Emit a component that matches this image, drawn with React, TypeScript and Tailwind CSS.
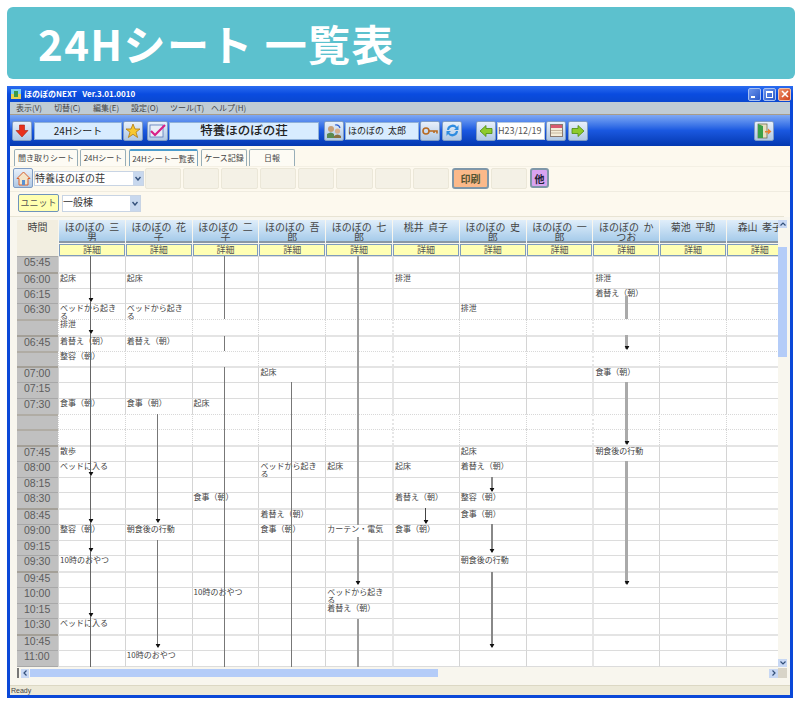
import React from "react";
import { Fragment } from "react";

const jp = "font-['Noto_Sans_CJK_JP',sans-serif]";

type RowLine = "thin" | "thick" | "dot";

const rowCells: Record<RowLine, string> = {
  thin: "border-t border-t-[#dcdcdc]",
  thick: "border-t-2 border-t-[#e4e4e4]",
  dot: "border-t border-dotted border-t-[#d8d8d8]",
};

const timeCells: Record<RowLine, string> = {
  thin: "border-t border-t-[#a8a8a8]",
  thick: "border-t-2 border-t-[#a4a098]",
  dot: "border-t-2 border-t-[#b0aca4]",
};

const rows: { time: string; line: RowLine; items?: Record<number, string> }[] = [
  { time: "05:45", line: "thin" },
  { time: "06:00", line: "thick", items: { 0: "起床", 1: "起床", 5: "排泄", 8: "排泄" } },
  { time: "06:15", line: "thin", items: { 8: "着替え（朝）" } },
  { time: "06:30", line: "thin", items: { 0: "ベッドから起き\nる", 1: "ベッドから起き\nる", 6: "排泄" } },
  { time: "", line: "dot", items: { 0: "排泄" } },
  { time: "06:45", line: "thick", items: { 0: "着替え（朝）", 1: "着替え（朝）" } },
  { time: "", line: "dot", items: { 0: "整容（朝）" } },
  { time: "07:00", line: "thick", items: { 3: "起床", 8: "食事（朝）" } },
  { time: "07:15", line: "thin" },
  { time: "07:30", line: "thin", items: { 0: "食事（朝）", 1: "食事（朝）", 2: "起床" } },
  { time: "", line: "dot" },
  { time: "", line: "dot" },
  { time: "07:45", line: "thick", items: { 0: "散歩", 6: "起床", 8: "朝食後の行動" } },
  { time: "08:00", line: "thin", items: { 0: "ベッドに入る", 3: "ベッドから起き\nる", 4: "起床", 5: "起床", 6: "着替え（朝）" } },
  { time: "08:15", line: "thin" },
  { time: "08:30", line: "thin", items: { 2: "食事（朝）", 5: "着替え（朝）", 6: "整容（朝）" } },
  { time: "08:45", line: "thick", items: { 3: "着替え（朝）", 6: "食事（朝）" } },
  { time: "09:00", line: "thin", items: { 0: "整容（朝）", 1: "朝食後の行動", 3: "食事（朝）", 4: "カーテン・電気", 5: "食事（朝）" } },
  { time: "09:15", line: "thin" },
  { time: "09:30", line: "thin", items: { 0: "10時のおやつ", 6: "朝食後の行動" } },
  { time: "09:45", line: "thick" },
  { time: "10:00", line: "thin", items: { 2: "10時のおやつ", 4: "ベッドから起き\nる" } },
  { time: "10:15", line: "thin", items: { 4: "着替え（朝）" } },
  { time: "10:30", line: "thin", items: { 0: "ベッドに入る" } },
  { time: "10:45", line: "thick" },
  { time: "11:00", line: "thin", items: { 1: "10時のおやつ" } },
  { time: "11:15", line: "thin" },
];

const names = [
  "ほのぼの  三\n男",
  "ほのぼの  花\n子",
  "ほのぼの  二\n子",
  "ほのぼの  吾\n郎",
  "ほのぼの  七\n郎",
  "桃井  貞子",
  "ほのぼの  史\n郎",
  "ほのぼの  一\n郎",
  "ほのぼの  か\nつお",
  "菊池  平助",
  "森山  孝子",
];

// x, from, to, width, colour, arrow at the end (page coordinates)
const lines: [number, number, number, number, string, boolean][] = [
  [90, 257, 302, 1, "#666666", true],
  [90, 302, 334, 1, "#666666", true],
  [90, 334, 476, 1, "#666666", true],
  [90, 476, 523, 1, "#666666", true],
  [90, 523, 552, 1, "#666666", true],
  [90, 552, 617, 1, "#666666", true],
  [90, 617, 668, 1, "#666666", false],
  [157, 415, 523, 1, "#777777", true],
  [157, 541, 648, 1, "#777777", true],
  [224, 257, 320, 1, "#777777", false],
  [224, 337, 352, 1, "#777777", false],
  [224, 368, 668, 1, "#777777", false],
  [291, 383, 668, 1, "#777777", false],
  [357, 257, 526, 2, "#9c9c9c", false],
  [357, 538, 585, 2, "#9c9c9c", true],
  [357, 620, 668, 2, "#9c9c9c", false],
  [425, 509, 524, 1, "#444444", true],
  [491, 478, 492, 2, "#888888", true],
  [491, 525, 553, 2, "#888888", true],
  [491, 573, 648, 2, "#888888", true],
  [625, 297, 320, 3, "#aaaaaa", false],
  [625, 336, 350, 3, "#aaaaaa", true],
  [625, 383, 445, 3, "#aaaaaa", true],
  [625, 462, 585, 3, "#aaaaaa", true],
];

const blanks = ["w-[36px]", "w-[36px]", "w-[37px]", "w-[36px]", "w-[36px]", "w-[37px]", "w-[36px]", "w-[36px]"];

function Multi({ text }: { text: string }) {
  return (
    <>
      {text.split("\n").map((t, i) => (
        <Fragment key={i}>
          {i > 0 && <br />}
          {t}
        </Fragment>
      ))}
    </>
  );
}

function IconBtn({ className = "", children }: { className?: string; children: React.ReactNode }) {
  return (
    <div
      className={`w-[20px] h-[20px] shrink-0 flex items-center justify-center rounded-[2px] border border-[#7f9cc4] bg-linear-to-b from-[#e8f0fa] to-[#b0c8e4] ${className}`}
    >
      {children}
    </div>
  );
}

function BlueField({ className = "", children }: { className?: string; children: React.ReactNode }) {
  return (
    <div
      className={`h-[18px] shrink-0 flex items-center justify-center bg-[#d8ecff] border border-[#8fb0d8] text-[#222] ${jp} ${className}`}
    >
      {children}
    </div>
  );
}

function Combo({ className = "", children }: { className?: string; children: React.ReactNode }) {
  return (
    <div className={`relative shrink-0 bg-white border border-[#c8d4e4] text-[#333] text-[10px] leading-[11px] ${jp} ${className}`}>
      {children}
      <div className="absolute right-0 top-0 bottom-0 w-[10px] bg-[#c8d8ee] flex items-center justify-center">
        <svg width="6" height="5" viewBox="0 0 6 5">
          <path d="M0.5 1 L3 4 L5.5 1" fill="none" stroke="#33507a" strokeWidth="1.4" />
        </svg>
      </div>
    </div>
  );
}

function Tab({ className = "", active = false, label }: { className?: string; active?: boolean; label: string }) {
  return (
    <div
      className={`h-[17px] shrink-0 flex items-center justify-center rounded-t-[2px] border border-b-0 border-[#98aeb8] bg-[#fdfbf4] text-[8px] text-[#444] ${jp} ${
        active ? "border-t-2 border-t-[#4c9ccc] border-x-[#7ea6c0]" : ""
      } ${className}`}
    >
      {label}
    </div>
  );
}

function Arrow() {
  return (
    <svg className="absolute -bottom-px left-1/2 -translate-x-1/2" width="5" height="4" viewBox="0 0 5 4">
      <path d="M0 0 H5 L2.5 4 Z" fill="#111" />
    </svg>
  );
}

function GreenArrow({ flip = false }: { flip?: boolean }) {
  return (
    <svg width="14" height="14" viewBox="0 0 14 14" className={flip ? "-scale-x-100" : ""}>
      <path d="M1 7 L7 1.5 V4.5 H13 V9.5 H7 V12.5 Z" fill="#8ecb2c" stroke="#4b8a10" strokeWidth="0.8" />
    </svg>
  );
}

export default function App() {
  return (
    <div className="w-[800px] h-[702px] bg-white overflow-hidden pt-[7px] pl-[7px]">
      {/* Banner */}
      <div className="w-[788px] h-[72px] rounded-[6px] bg-[#5cc1ce] flex items-center pl-[31px]">
        <span className={`text-[42px] leading-none font-bold tracking-[1.4px] text-white ${jp}`}>24Hシート 一覧表</span>
      </div>

      {/* Window */}
      <div className="mt-[7px] w-[786px] h-[612px] bg-[#0a48d8] flex flex-col">
        <div className="h-[16px] shrink-0 flex items-center pl-[3px] pr-[2px] bg-linear-to-b from-[#2a6cf0] via-[#0a4ce0] to-[#0a48d0]">
          <svg width="12" height="12" viewBox="0 0 12 12" className="shrink-0">
            <rect x="1" y="1" width="10" height="5" fill="#7fd0f0" />
            <rect x="1" y="6" width="10" height="5" fill="#e8d050" />
            <rect x="4" y="3" width="4" height="6" fill="#3a9a4a" />
          </svg>
          <span className={`ml-[2px] text-[8px] font-bold text-white whitespace-pre ${jp}`}>ほのぼのNEXT   Ver.3.01.0010</span>
          <div className="ml-auto flex gap-[2px]">
            <div className="w-[13px] h-[13px] rounded-[2px] border border-[#a8c0f0] bg-linear-to-br from-[#6c94ec] to-[#2a58c8] flex items-end pl-[2px] pb-[2px]">
              <div className="w-[4px] h-[2px] bg-white" />
            </div>
            <div className="w-[13px] h-[13px] rounded-[2px] border border-[#a8c0f0] bg-linear-to-br from-[#6c94ec] to-[#2a58c8] flex items-center justify-center">
              <div className="w-[7px] h-[7px] border border-white border-t-2" />
            </div>
            <div className="w-[13px] h-[13px] rounded-[2px] border border-[#f0c0a8] bg-linear-to-br from-[#ec9068] to-[#d04018] flex items-center justify-center">
              <svg width="8" height="8" viewBox="0 0 8 8">
                <path d="M1 1 L7 7 M7 1 L1 7" stroke="#fff" strokeWidth="1.6" />
              </svg>
            </div>
          </div>
        </div>

        <div className="mx-[3px] mb-[3px] flex-1 min-h-0 flex flex-col bg-[#fdf9ee]">
          {/* Menu */}
          <div className={`h-[13px] shrink-0 flex items-center bg-[#c0ccd4] border-b border-[#a89c88] text-[8px] text-[#444] pl-[6px] ${jp}`}>
            <span className="w-[38px]">表示(V)</span>
            <span className="w-[39px]">切替(C)</span>
            <span className="w-[38px]">編集(E)</span>
            <span className="w-[39px]">設定(O)</span>
            <span className="w-[41px]">ツール(T)</span>
            <span>ヘルプ(H)</span>
          </div>

          {/* Blue toolbar */}
          <div className="h-[31px] shrink-0 flex items-center pl-[2px] bg-linear-to-b from-[#7ea8f4] via-[#1a58e0] to-[#0438b0]">
            <IconBtn>
              <svg width="14" height="14" viewBox="0 0 14 14">
                <path d="M4.5 1 H9.5 V6.5 H13 L7 13 L1 6.5 H4.5 Z" fill="#e8301c" stroke="#a82010" strokeWidth="0.6" />
              </svg>
            </IconBtn>
            <BlueField className="ml-[2px] w-[88px] text-[10px]">24Hシート</BlueField>
            <IconBtn className="ml-px">
              <svg width="16" height="16" viewBox="0 0 16 16">
                <path d="M8 1 L10 6 H15 L11 9.2 L12.6 14.5 L8 11.3 L3.4 14.5 L5 9.2 L1 6 H6 Z" fill="#f8c830" stroke="#b07810" strokeWidth="0.8" />
              </svg>
            </IconBtn>
            <IconBtn className="ml-[4px] w-[21px]">
              <svg width="17" height="15" viewBox="0 0 17 15">
                <rect x="1" y="2" width="13" height="12" fill="#e8eef8" stroke="#5878b8" strokeWidth="0.8" />
                <path d="M2 8 L6 12 L16 2" fill="none" stroke="#d82088" strokeWidth="2.2" />
              </svg>
            </IconBtn>
            <BlueField className="ml-px w-[150px] text-[12.5px] font-medium">特養ほのぼの荘</BlueField>
            <IconBtn className="ml-[5px]">
              <svg width="16" height="16" viewBox="0 0 16 16">
                <circle cx="5" cy="6" r="3" fill="#c8a078" />
                <path d="M1 15 V11 Q5 8 8 11 V15 Z" fill="#5a8a50" />
                <circle cx="11.5" cy="8" r="2.6" fill="#d8b090" />
                <path d="M8 15 V13 Q11.5 10 15 13 V15 Z" fill="#8a7040" />
                <path d="M9 2 Q13 1 14 5" fill="none" stroke="#3060d0" strokeWidth="1.2" />
              </svg>
            </IconBtn>
            <BlueField className="ml-px w-[74px] text-[9px] justify-start! pl-[2px] whitespace-pre">ほのぼの  太郎</BlueField>
            <IconBtn className="ml-px">
              <svg width="16" height="10" viewBox="0 0 16 10">
                <circle cx="4" cy="5" r="3" fill="none" stroke="#b86a20" strokeWidth="1.6" />
                <path d="M7 5 H15 V7.5 M12 5 V7" fill="none" stroke="#b86a20" strokeWidth="1.6" />
              </svg>
            </IconBtn>
            <IconBtn className="ml-[2px]">
              <svg width="15" height="15" viewBox="0 0 15 15">
                <path d="M2 7 A5.5 5.5 0 0 1 12 4 L13.5 2 V7 H9 L10.8 5.2 A4 4 0 0 0 4 7 Z" fill="#2f8ce0" />
                <path d="M13 8 A5.5 5.5 0 0 1 3 11 L1.5 13 V8 H6 L4.2 9.8 A4 4 0 0 0 11 8 Z" fill="#2f8ce0" />
              </svg>
            </IconBtn>
            <IconBtn className="ml-[14px]">
              <GreenArrow />
            </IconBtn>
            <div className={`ml-px w-[48px] h-[18px] shrink-0 flex items-center bg-white border border-[#b8c8dc] text-[9px] text-[#555] ${jp}`}>H23/12/19</div>
            <IconBtn className="ml-px w-[19px]">
              <svg width="13" height="13" viewBox="0 0 13 13">
                <rect x="0.5" y="0.5" width="12" height="12" fill="#f4ecd8" stroke="#8a7a70" />
                <rect x="1" y="1" width="11" height="3" fill="#d85a70" />
                <path d="M1 6.5 H12 M1 9 H12" stroke="#c8b8a0" />
              </svg>
            </IconBtn>
            <IconBtn className="ml-[2px]">
              <GreenArrow flip />
            </IconBtn>
            <IconBtn className="ml-[166px]">
              <svg width="15" height="16" viewBox="0 0 15 16">
                <rect x="1" y="1" width="9" height="14" fill="#e8e0c0" stroke="#707050" strokeWidth="0.8" />
                <path d="M1 1 L6 3 V15 H1 Z" fill="#3aa048" />
                <path d="M8 8 H11 V5.5 L14.5 8.5 L11 11.5 V9.5 H8 Z" fill="#e88030" />
              </svg>
            </IconBtn>
          </div>

          {/* Tabs */}
          <div className="h-[20px] shrink-0 flex items-end pl-[4px]">
            <Tab className="w-[64px]" label="聞き取りシート" />
            <Tab className="ml-[2px] w-[46px]" label="24Hシート" />
            <Tab className="ml-[3px] w-[69px]" active label="24Hシート一覧表" />
            <Tab className="ml-[3px] w-[46px]" label="ケース記録" />
            <Tab className="ml-[2px] w-[46px]" label="日報" />
          </div>

          {/* Action row */}
          <div className="h-[26px] shrink-0 flex items-center pl-[3px] pb-[2px] border-b border-[#f0ece0] border-t border-t-[#f4f0e4]">
            <IconBtn className="w-[19px]">
              <svg width="15" height="15" viewBox="0 0 15 15">
                <path d="M7.5 1 L14 7.5 H12 V14 H3 V7.5 H1 Z" fill="#f4e4c8" stroke="#d86030" strokeWidth="1" />
                <rect x="6" y="9" width="3" height="5" fill="#5a90d0" />
              </svg>
            </IconBtn>
            <Combo className="ml-px w-[110px] h-[15px]">特養ほのぼの荘</Combo>
            <div className="ml-px flex gap-[2px]">
              {blanks.map((w, i) => (
                <div key={i} className={`${w} h-[21px] bg-[#f4f1e6] border border-[#ebe7d8] rounded-[2px]`} />
              ))}
            </div>
            <div className={`ml-[3px] w-[37px] h-[21px] shrink-0 flex items-center justify-center bg-[#fbb98a] border-2 border-[#7f97a8] rounded-[3px] text-[10px] text-[#553] font-bold ${jp}`}>
              印刷
            </div>
            <div className="ml-[2px] w-[36px] h-[21px] bg-[#f4f1e6] border border-[#ebe7d8] rounded-[2px]" />
            <div className={`ml-[3px] w-[19px] h-[20px] shrink-0 flex items-center justify-center bg-[#d8a4f0] border-2 border-[#7f97a8] rounded-[3px] text-[10px] text-[#223] font-bold ${jp}`}>
              他
            </div>
          </div>

          {/* Unit row */}
          <div className="h-[25px] shrink-0 flex items-center pl-[8px] pb-[2px] border-b border-[#e8e4d4] mr-[6px]">
            <div className={`w-[41px] h-[18px] shrink-0 flex items-center justify-center bg-[#ffffb0] border border-[#6f94bc] rounded-[2px] text-[9px] whitespace-nowrap text-[#555] ${jp}`}>
              ユニット
            </div>
            <Combo className="ml-[3px] w-[79px] h-[17px]">一般棟</Combo>
          </div>

          {/* Grid */}
          <div className="flex-1 min-h-0 flex pl-[7px] bg-[#f8f6ee]">
            <div className="w-[761px] shrink-0 flex flex-col">
              <div className="mt-[3px] h-[36px] shrink-0 flex overflow-hidden">
                <div className={`w-[41px] shrink-0 bg-[#f2eee0] text-center text-[10px] leading-[12px] pt-[1px] text-[#444] ${jp}`}>時間</div>
                {names.map((n, i) => (
                  <div key={i} className="w-[66.8px] shrink-0 flex flex-col pl-px">
                    <div className={`h-[21px] shrink-0 bg-linear-to-b from-[#e0eefa] to-[#a6cbea] text-center text-[10px] leading-[9.5px] pt-[2px] text-[#444] whitespace-pre ${jp}`}>
                      <Multi text={n} />
                    </div>
                    <div className="h-[2px] shrink-0 bg-[#8a98a4]" />
                    <div className={`mt-px h-[12px] shrink-0 flex items-center justify-center bg-[#ffffb4] border border-[#7f9cbc] text-[9px] text-[#555] ${jp}`}>詳細</div>
                  </div>
                ))}
              </div>

              <div className="relative h-[411px] shrink-0 overflow-hidden bg-white">
                {rows.map((r, i) => (
                  <div key={i} className="h-[15.75px] flex">
                    <div className={`w-[41px] shrink-0 box-border bg-[#c0c0c0] pl-[7px] text-[10.5px] leading-[11px] text-[#5c5c5c] font-['Liberation_Sans',sans-serif] ${timeCells[r.line]}`}>
                      {r.time}
                    </div>
                    {names.map((_, c) => (
                      <div
                        key={c}
                        className={`w-[66.8px] shrink-0 box-border pl-px text-[8px] leading-[8px] text-[#444] whitespace-nowrap border-l ${
                          c === 5 || c === 8 ? "border-l-2 border-l-[#e6e6e6]" : "border-l-[#d4d4d4]"
                        } ${rowCells[r.line]} ${jp}`}
                      >
                        {r.items?.[c] && <Multi text={r.items[c]} />}
                      </div>
                    ))}
                  </div>
                ))}

                {lines.map(([x, from, to, w, color, arrow], i) => (
                  <div
                    key={i}
                    className="absolute"
                    style={{ left: x - 17, top: from - 257, height: to - from, width: w, background: color }}
                  >
                    {arrow && <Arrow />}
                  </div>
                ))}
              </div>

              {/* Horizontal scrollbar */}
              <div className="mt-px h-[10px] shrink-0 flex items-center">
                <div className="w-[2px] h-[10px] bg-[#777] shrink-0" />
                <div className="ml-[2px] w-[8px] h-[9px] bg-[#c8d8f4] shrink-0 flex items-center justify-center">
                  <svg width="4" height="6" viewBox="0 0 4 6">
                    <path d="M3.5 0.5 L1 3 L3.5 5.5" fill="none" stroke="#33507a" strokeWidth="1.2" />
                  </svg>
                </div>
                <div className="ml-px w-[408px] h-[8px] bg-[#b4ccf8] shrink-0" />
                <div className="ml-auto w-[9px] h-[9px] bg-[#c8d8f4] shrink-0 flex items-center justify-center">
                  <svg width="4" height="6" viewBox="0 0 4 6">
                    <path d="M0.5 0.5 L3 3 L0.5 5.5" fill="none" stroke="#33507a" strokeWidth="1.2" />
                  </svg>
                </div>
              </div>
            </div>

            {/* Vertical scrollbar */}
            <div className="w-[9px] shrink-0 flex flex-col">
              <div className="mt-[3px] h-[8px] bg-[#c8d8f4] flex items-center justify-center">
                <svg width="6" height="4" viewBox="0 0 6 4">
                  <path d="M0.5 3.5 L3 1 L5.5 3.5" fill="none" stroke="#33507a" strokeWidth="1.2" />
                </svg>
              </div>
              <div className="mt-[19px] h-[110px] bg-[#b4ccf8]" />
              <div className="mt-[302px] h-[8px] bg-[#c8d8f4] flex items-center justify-center">
                <svg width="6" height="4" viewBox="0 0 6 4">
                  <path d="M0.5 0.5 L3 3 L5.5 0.5" fill="none" stroke="#33507a" strokeWidth="1.2" />
                </svg>
              </div>
              <div className="mt-[1px] h-[10px] bg-[#d8d4c8]" />
            </div>
          </div>

          {/* Status bar */}
          <div className="h-[10px] shrink-0 bg-[#ece9d8] border-t border-[#dcd8c4] pl-[1px] text-[7px] leading-[9px] text-[#444] font-['Liberation_Sans',sans-serif]">
            Ready
          </div>
        </div>
      </div>
    </div>
  );
}
